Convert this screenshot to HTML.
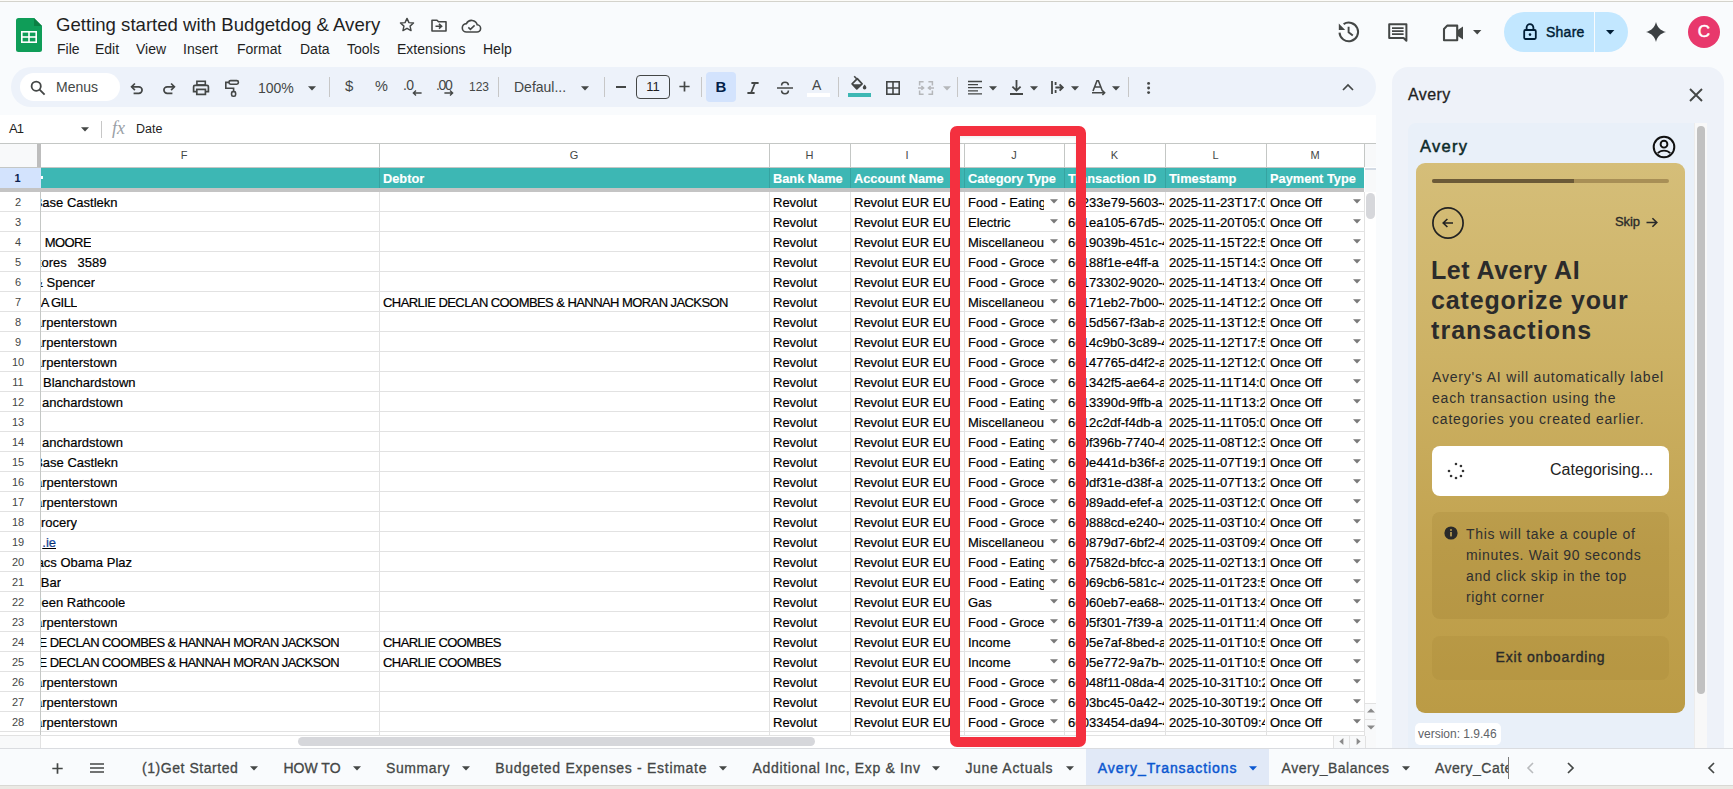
<!DOCTYPE html>
<html><head><meta charset="utf-8"><title>Sheets</title>
<style>
*{box-sizing:border-box;margin:0;padding:0}
html,body{width:1733px;height:789px;overflow:hidden;background:#f9fbfd;font-family:"Liberation Sans", sans-serif;color:#1f1f1f}
.abs{position:absolute}
.t{position:absolute;white-space:nowrap}
svg{position:absolute;overflow:visible}
.cell{position:absolute;overflow:hidden;white-space:pre;font-size:13px;line-height:20px;color:#000;padding-top:1px;-webkit-text-stroke:0.2px #000}
.cell .rt{top:1px}
.rt{position:absolute;right:0;top:0}
.hl{position:absolute;height:1px;background:#e2e2e2}
.vl{position:absolute;width:1px;background:#e2e2e2}
</style></head><body>

<div class="abs" style="left:0;top:0;width:1733px;height:1px;background:#fcfbf8"></div>
<div class="abs" style="left:0;top:1px;width:1733px;height:1px;background:#d4d3cc"></div>
<svg style="left:16px;top:18px" width="26" height="34" viewBox="0 0 26 34">
<path d="M2.5 0H18L26 8V31.5Q26 34 23.5 34H2.5Q0 34 0 31.5V2.5Q0 0 2.5 0Z" fill="#0f9d58"/>
<path d="M18 0L26 8H18Z" fill="#0b7f43"/>
<rect x="5" y="13" width="16" height="12" fill="#fff"/>
<rect x="6.6" y="14.6" width="5.6" height="3.6" fill="#0f9d58"/>
<rect x="13.8" y="14.6" width="5.6" height="3.6" fill="#0f9d58"/>
<rect x="6.6" y="19.8" width="5.6" height="3.6" fill="#0f9d58"/>
<rect x="13.8" y="19.8" width="5.6" height="3.6" fill="#0f9d58"/>
</svg>
<div class="t" style="left:56px;top:13px;font-size:18.6px;line-height:24px;color:#1f1f1f">Getting started with Budgetdog &amp; Avery</div>
<svg style="left:398px;top:16px" width="18" height="18" viewBox="0 0 24 24"><path d="M12 3.2l2.6 5.6 6.1.6-4.6 4.1 1.3 6-5.4-3.1-5.4 3.1 1.3-6-4.6-4.1 6.1-.6z" fill="none" stroke="#444746" stroke-width="1.9" stroke-linejoin="round"/></svg>
<svg style="left:431px;top:19px" width="16" height="13" viewBox="0 0 16 13"><path d="M1 1.2H6L7.5 2.7H15V12H1Z" fill="none" stroke="#444746" stroke-width="1.6" stroke-linejoin="round"/><path d="M4.5 7.2H10M8 4.8L10.6 7.2 8 9.6" fill="none" stroke="#444746" stroke-width="1.6"/></svg>
<svg style="left:462px;top:19px" width="19" height="14" viewBox="0 0 19 14"><path d="M4.6 13H14.8A3.6 3.6 0 0 0 15.2 5.8 5.8 5.8 0 0 0 4.4 4.6 4.2 4.2 0 0 0 4.6 13Z" fill="none" stroke="#444746" stroke-width="1.6"/><path d="M6.3 8.4L8.4 10.4 12.6 6.4" fill="none" stroke="#444746" stroke-width="1.5"/></svg>
<div class="t" style="left:57px;top:40px;font-size:14px;line-height:18px;color:#1f1f1f">File</div>
<div class="t" style="left:95px;top:40px;font-size:14px;line-height:18px;color:#1f1f1f">Edit</div>
<div class="t" style="left:136px;top:40px;font-size:14px;line-height:18px;color:#1f1f1f">View</div>
<div class="t" style="left:183px;top:40px;font-size:14px;line-height:18px;color:#1f1f1f">Insert</div>
<div class="t" style="left:237px;top:40px;font-size:14px;line-height:18px;color:#1f1f1f">Format</div>
<div class="t" style="left:300px;top:40px;font-size:14px;line-height:18px;color:#1f1f1f">Data</div>
<div class="t" style="left:347px;top:40px;font-size:14px;line-height:18px;color:#1f1f1f">Tools</div>
<div class="t" style="left:397px;top:40px;font-size:14px;line-height:18px;color:#1f1f1f">Extensions</div>
<div class="t" style="left:483px;top:40px;font-size:14px;line-height:18px;color:#1f1f1f">Help</div>
<svg style="left:1336px;top:20px" width="24" height="24" viewBox="0 0 24 24"><path d="M3.5 12.6A9.3 9.3 0 1 0 7.6 4.2" fill="none" stroke="#444746" stroke-width="2"/><path d="M2.8 3.6V10H9.2Z" fill="#444746"/><path d="M12.6 6.8V12.2L16.8 15.6" fill="none" stroke="#444746" stroke-width="1.9"/></svg>
<svg style="left:1387px;top:22px" width="22" height="22" viewBox="0 0 22 22"><path d="M2.2 2.2H19.4V18.8L16.6 16H2.2Z" fill="none" stroke="#444746" stroke-width="2" stroke-linejoin="round"/><path d="M5 6.2H16.6M5 9.2H16.6M5 12.2H16.6" stroke="#444746" stroke-width="1.7"/></svg>
<svg style="left:1442px;top:24px" width="23" height="18" viewBox="0 0 23 18"><path d="M5.2 1.6H15.2V16.2H2V5Z" fill="none" stroke="#444746" stroke-width="2.1" stroke-linejoin="round"/><path d="M15 6.6L21 2.6V15.4L15 11.4Z" fill="#444746"/></svg>
<svg style="left:1473px;top:30px" width="9" height="5" viewBox="0 0 9 5"><path d="M0 0H8.4L4.2 4.4Z" fill="#444746"/></svg>
<div class="abs" style="left:1504px;top:12px;width:124px;height:40px;border-radius:20px;background:#c2e7ff"></div>
<div class="abs" style="left:1594px;top:12px;width:1px;height:40px;background:#f9fbfd"></div>
<svg style="left:1523px;top:23px" width="14" height="17" viewBox="0 0 14 17"><rect x="1.2" y="7" width="11.6" height="9" rx="1.2" fill="none" stroke="#001d35" stroke-width="1.8"/><path d="M3.6 7V4.6A3.4 3.4 0 0 1 10.4 4.6V7" fill="none" stroke="#001d35" stroke-width="1.8"/><circle cx="7" cy="11.6" r="1.3" fill="#001d35"/></svg>
<div class="t" style="left:1546px;top:23px;font-size:14px;line-height:18px;color:#001d35;letter-spacing:0.25px;-webkit-text-stroke:0.4px #001d35">Share</div>
<svg style="left:1606px;top:30px" width="9" height="5" viewBox="0 0 9 5"><path d="M0 0H8.4L4.2 4.4Z" fill="#001d35"/></svg>
<svg style="left:1646px;top:22px" width="20" height="20" viewBox="0 0 20 20"><path d="M10 0C11.4 5.4 14.6 8.6 20 10C14.6 11.4 11.4 14.6 10 20C8.6 14.6 5.4 11.4 0 10C5.4 8.6 8.6 5.4 10 0Z" fill="#3c4043"/></svg>
<div class="abs" style="left:1688px;top:16px;width:32px;height:32px;border-radius:50%;background:#e8386c"></div>
<div class="t" style="left:1688px;top:22px;width:32px;text-align:center;font-size:17px;line-height:20px;color:#fff;-webkit-text-stroke:0.5px #fff">C</div>
<div class="abs" style="left:11px;top:67px;width:1365px;height:40px;border-radius:20px;background:#edf2fa"></div>
<div class="abs" style="left:20px;top:73px;width:100px;height:28px;border-radius:14px;background:#fff"></div>
<svg style="left:30px;top:80px" width="16" height="16" viewBox="0 0 16 16"><circle cx="6.2" cy="6.2" r="4.6" fill="none" stroke="#444746" stroke-width="1.8"/><path d="M9.6 9.6L14.6 14.6" stroke="#444746" stroke-width="1.9"/></svg>
<div class="t" style="left:56px;top:78px;font-size:14px;line-height:18px;color:#444746">Menus</div>
<svg style="left:130px;top:81px" width="14" height="14" viewBox="0 0 14 14"><path d="M1.8 5.8H8.8A3.3 3.3 0 0 1 8.8 12.4H3.6" fill="none" stroke="#444746" stroke-width="1.7"/><path d="M4.9 2.5L1.6 5.8 4.9 9.1" fill="none" stroke="#444746" stroke-width="1.7"/></svg>
<svg style="left:162px;top:81px" width="14" height="14" viewBox="0 0 14 14"><path d="M12.2 5.8H5.2A3.3 3.3 0 0 0 5.2 12.4H10.4" fill="none" stroke="#444746" stroke-width="1.7"/><path d="M9.1 2.5L12.4 5.8 9.1 9.1" fill="none" stroke="#444746" stroke-width="1.7"/></svg>
<svg style="left:192px;top:80px" width="18" height="16" viewBox="0 0 18 16"><rect x="4.9" y="1.3" width="8.4" height="3.6" fill="none" stroke="#444746" stroke-width="1.6"/><path d="M4.4 11.6H1.6V6.8Q1.6 5.4 3 5.4H15Q16.4 5.4 16.4 6.8V11.6H13.6" fill="none" stroke="#444746" stroke-width="1.7"/><rect x="4.8" y="9.4" width="8.6" height="5" fill="none" stroke="#444746" stroke-width="1.7"/></svg>
<svg style="left:224px;top:79px" width="16" height="18" viewBox="0 0 16 18"><rect x="5" y="1.6" width="9.4" height="3.6" rx="1.6" fill="none" stroke="#444746" stroke-width="1.6"/><path d="M5 3.4H1.8V9.2H9.6V12.6" fill="none" stroke="#444746" stroke-width="1.6"/><rect x="7.6" y="12.6" width="4" height="4.6" rx="1.5" fill="none" stroke="#444746" stroke-width="1.6"/></svg>
<div class="t" style="left:258px;top:79px;font-size:14px;line-height:18px;color:#444746">100%</div>
<svg style="left:308px;top:86px" width="8" height="5" viewBox="0 0 8 4.4"><path d="M0 0H8L4 4.2Z" fill="#444746"/></svg>
<div class="abs" style="left:329px;top:77px;width:1px;height:20px;background:#c7c7c7"></div>
<div class="abs" style="left:498px;top:77px;width:1px;height:20px;background:#c7c7c7"></div>
<div class="abs" style="left:604px;top:77px;width:1px;height:20px;background:#c7c7c7"></div>
<div class="abs" style="left:701px;top:77px;width:1px;height:20px;background:#c7c7c7"></div>
<div class="abs" style="left:838px;top:77px;width:1px;height:20px;background:#c7c7c7"></div>
<div class="abs" style="left:957px;top:77px;width:1px;height:20px;background:#c7c7c7"></div>
<div class="abs" style="left:1128px;top:77px;width:1px;height:20px;background:#c7c7c7"></div>
<div class="t" style="left:345px;top:77px;font-size:15px;line-height:18px;color:#444746">$</div>
<div class="t" style="left:375px;top:77px;font-size:14.5px;line-height:18px;color:#444746">%</div>
<div class="t" style="left:403px;top:77px;font-size:14px;line-height:16px;color:#444746;letter-spacing:-0.6px">.0</div>
<svg style="left:412px;top:90px" width="10" height="6" viewBox="0 0 10 6"><path d="M9.6 3H1.6M4 0.6L1.4 3 4 5.4" fill="none" stroke="#444746" stroke-width="1.4"/></svg>
<div class="t" style="left:436px;top:77px;font-size:14px;line-height:16px;color:#444746;letter-spacing:-1.4px">.00</div>
<svg style="left:444px;top:90px" width="10" height="6" viewBox="0 0 10 6"><path d="M0.4 3H8.4M6 0.6L8.6 3 6 5.4" fill="none" stroke="#444746" stroke-width="1.4"/></svg>
<div class="t" style="left:469px;top:79px;font-size:12px;line-height:16px;color:#444746">123</div>
<div class="t" style="left:514px;top:78px;font-size:14px;line-height:18px;color:#444746">Defaul...</div>
<svg style="left:581px;top:86px" width="8" height="5" viewBox="0 0 8 4.4"><path d="M0 0H8L4 4.2Z" fill="#444746"/></svg>
<div class="abs" style="left:616px;top:86px;width:10px;height:1.6px;background:#444746"></div>
<div class="abs" style="left:636px;top:75px;width:34px;height:24px;border:1px solid #444746;border-radius:4px"></div>
<div class="t" style="left:636px;top:79px;width:34px;text-align:center;font-size:13px;line-height:16px;color:#1f1f1f">11</div>
<svg style="left:679px;top:81px" width="11" height="11" viewBox="0 0 11 11"><path d="M5.5 0.4V10.6M0.4 5.5H10.6" stroke="#444746" stroke-width="1.7"/></svg>
<div class="abs" style="left:706px;top:72px;width:30px;height:30px;border-radius:4px;background:#d3e3fd"></div>
<div class="t" style="left:706px;top:78px;width:30px;text-align:center;font-size:15px;line-height:18px;font-weight:bold;color:#041e49">B</div>
<svg style="left:747px;top:82px" width="12" height="12" viewBox="0 0 12 12"><path d="M4.4 1H11.6M0.4 11H7.6M8 1L4 11" fill="none" stroke="#444746" stroke-width="1.8"/></svg>
<svg style="left:777px;top:81px" width="16" height="14" viewBox="0 0 16 14"><path d="M0 7H16" stroke="#444746" stroke-width="1.5"/><path d="M4.6 4.6Q4.6 1.2 8 1.2T11.4 4.2M4.6 9.6Q4.6 12.8 8 12.8T11.4 9.6" fill="none" stroke="#444746" stroke-width="1.6"/></svg>
<div class="t" style="left:812px;top:77px;font-size:14px;line-height:16px;color:#444746">A</div>
<div class="abs" style="left:807px;top:93px;width:23px;height:4px;background:#ffffff"></div>
<svg style="left:851px;top:76px" width="16" height="14" viewBox="0 0 16 14"><path d="M3.2 0.3L6.6 3.7" stroke="#444746" stroke-width="1.6"/><path d="M1.1 7.9L6.3 2.7 11.1 7.9 5.8 12.9Z" fill="none" stroke="#444746" stroke-width="1.7" stroke-linejoin="round"/><path d="M1.1 8.2H11.1L5.8 12.9Z" fill="#444746"/><path d="M13.6 8.6Q15.4 10.6 15.4 11.7A1.8 1.8 0 0 1 11.8 11.7Q11.8 10.6 13.6 8.6Z" fill="#444746"/></svg>
<div class="abs" style="left:848px;top:93px;width:23px;height:4px;background:#3db7b4"></div>
<svg style="left:886px;top:81px" width="14" height="14" viewBox="0 0 14 14"><rect x="0.8" y="0.8" width="12.4" height="12.4" fill="none" stroke="#444746" stroke-width="1.6"/><path d="M7 1V13M1 7H13" stroke="#444746" stroke-width="1.6"/></svg>
<svg style="left:918px;top:81px" width="16" height="14" viewBox="0 0 16 14"><path d="M5.6 0.8H1.6V4.4M1.6 9.6V13.2H5.6M10.4 0.8H14.4V4.4M14.4 9.6V13.2H10.4" fill="none" stroke="#b5b7ba" stroke-width="1.5"/><path d="M0 6.9H5M3.4 5L5.6 6.9 3.4 8.8M16 6.9H11M12.6 5L10.4 6.9 12.6 8.8" fill="none" stroke="#b5b7ba" stroke-width="1.5"/></svg>
<svg style="left:943px;top:86px" width="8" height="5" viewBox="0 0 8 4.4"><path d="M0 0H8L4 4.2Z" fill="#b5b7ba"/></svg>
<svg style="left:968px;top:80px" width="14" height="15" viewBox="0 0 14 15"><path d="M0 1.5H14M0 4.6H10M0 7.7H14M0 10.8H10M0 13.9H14" stroke="#444746" stroke-width="1.3"/></svg>
<svg style="left:989px;top:86px" width="8" height="5" viewBox="0 0 8 4.4"><path d="M0 0H8L4 4.2Z" fill="#444746"/></svg>
<svg style="left:1010px;top:80px" width="13" height="15" viewBox="0 0 13 15"><path d="M6.5 0V10.4M2.4 6.6L6.5 10.6 10.6 6.6M0 14H13" fill="none" stroke="#444746" stroke-width="1.8"/></svg>
<svg style="left:1030px;top:86px" width="8" height="5" viewBox="0 0 8 4.4"><path d="M0 0H8L4 4.2Z" fill="#444746"/></svg>
<svg style="left:1051px;top:81px" width="13" height="13" viewBox="0 0 13 13"><path d="M1 0V13M4.4 6.5H11.6M8.6 3.4L11.8 6.5 8.6 9.6M4.6 1V4M4.6 9V12" fill="none" stroke="#444746" stroke-width="1.8"/></svg>
<svg style="left:1071px;top:86px" width="8" height="5" viewBox="0 0 8 4.4"><path d="M0 0H8L4 4.2Z" fill="#444746"/></svg>
<svg style="left:1092px;top:80px" width="14" height="15" viewBox="0 0 14 15"><path d="M1 11L5 0.8H6.4L10.4 11M2.6 7H8.8" fill="none" stroke="#444746" stroke-width="1.6"/><path d="M0 12.8H12M10.4 10.6L12.6 12.8 10.4 15" fill="none" stroke="#444746" stroke-width="1.6"/></svg>
<svg style="left:1112px;top:86px" width="8" height="5" viewBox="0 0 8 4.4"><path d="M0 0H8L4 4.2Z" fill="#444746"/></svg>
<svg style="left:1146px;top:81px" width="5" height="14" viewBox="0 0 5 14"><circle cx="2.6" cy="2.4" r="1.45" fill="#444746"/><circle cx="2.6" cy="7" r="1.45" fill="#444746"/><circle cx="2.6" cy="11.6" r="1.45" fill="#444746"/></svg>
<svg style="left:1342px;top:83px" width="12" height="8" viewBox="0 0 12 8"><path d="M1 7L6 2 11 7" fill="none" stroke="#444746" stroke-width="1.7"/></svg>
<div class="abs" style="left:0;top:115px;width:1376px;height:633px;background:#fff"></div>
<div class="t" style="left:9px;top:121px;font-size:13px;line-height:16px;color:#1f1f1f;letter-spacing:-0.8px">A1</div>
<svg style="left:81px;top:127px" width="8" height="5" viewBox="0 0 8 4.4"><path d="M0 0H8L4 4.2Z" fill="#444746"/></svg>
<div class="abs" style="left:101px;top:121px;width:1px;height:17px;background:#c7c7c7"></div>
<div class="t" style="left:112px;top:119px;font-family:'Liberation Serif',serif;font-style:italic;font-size:18px;line-height:18px;color:#9aa0a6;letter-spacing:0px">fx</div>
<div class="t" style="left:136px;top:121px;font-size:12.5px;line-height:16px;color:#1f1f1f">Date</div>
<div class="abs" style="left:0;top:143px;width:1376px;height:1px;background:#c4c7c5"></div>
<div class="abs" style="left:0;top:144px;width:37px;height:23px;background:#f8f9fa"></div>
<div class="t" style="left:164px;top:147px;width:40px;text-align:center;font-size:11px;line-height:16px;color:#444746">F</div>
<div class="abs" style="left:379px;top:144px;width:1px;height:23px;background:#c4c7c5"></div>
<div class="t" style="left:554.0px;top:147px;width:40px;text-align:center;font-size:11px;line-height:16px;color:#444746">G</div>
<div class="abs" style="left:769px;top:144px;width:1px;height:23px;background:#c4c7c5"></div>
<div class="t" style="left:789.5px;top:147px;width:40px;text-align:center;font-size:11px;line-height:16px;color:#444746">H</div>
<div class="abs" style="left:850px;top:144px;width:1px;height:23px;background:#c4c7c5"></div>
<div class="t" style="left:887.0px;top:147px;width:40px;text-align:center;font-size:11px;line-height:16px;color:#444746">I</div>
<div class="abs" style="left:964px;top:144px;width:1px;height:23px;background:#c4c7c5"></div>
<div class="t" style="left:994.0px;top:147px;width:40px;text-align:center;font-size:11px;line-height:16px;color:#444746">J</div>
<div class="abs" style="left:1064px;top:144px;width:1px;height:23px;background:#c4c7c5"></div>
<div class="t" style="left:1094.5px;top:147px;width:40px;text-align:center;font-size:11px;line-height:16px;color:#444746">K</div>
<div class="abs" style="left:1165px;top:144px;width:1px;height:23px;background:#c4c7c5"></div>
<div class="t" style="left:1195.5px;top:147px;width:40px;text-align:center;font-size:11px;line-height:16px;color:#444746">L</div>
<div class="abs" style="left:1266px;top:144px;width:1px;height:23px;background:#c4c7c5"></div>
<div class="t" style="left:1295.0px;top:147px;width:40px;text-align:center;font-size:11px;line-height:16px;color:#444746">M</div>
<div class="abs" style="left:1364px;top:144px;width:1px;height:23px;background:#c4c7c5"></div>
<div class="abs" style="left:0;top:167px;width:1364px;height:1px;background:#c4c7c5"></div>
<div class="abs" style="left:1365px;top:144px;width:11px;height:23px;background:#f8f9fa"></div>
<div class="abs" style="left:37px;top:144px;width:4px;height:23px;background:#bdbdbd"></div>
<div class="abs" style="left:0;top:168px;width:41px;height:20px;background:#d3e3fd"></div>
<div class="t" style="left:0;top:170px;width:35px;text-align:center;font-size:11px;line-height:16px;font-weight:bold;color:#0b1f4d">1</div>
<div class="abs" style="left:41px;top:168px;width:1323px;height:20px;background:#3db7b4"></div>
<div class="abs" style="left:379px;top:168px;width:1px;height:20px;background:#36a3a1"></div>
<div class="abs" style="left:769px;top:168px;width:1px;height:20px;background:#36a3a1"></div>
<div class="abs" style="left:850px;top:168px;width:1px;height:20px;background:#36a3a1"></div>
<div class="abs" style="left:964px;top:168px;width:1px;height:20px;background:#36a3a1"></div>
<div class="abs" style="left:1064px;top:168px;width:1px;height:20px;background:#36a3a1"></div>
<div class="abs" style="left:1165px;top:168px;width:1px;height:20px;background:#36a3a1"></div>
<div class="abs" style="left:1266px;top:168px;width:1px;height:20px;background:#36a3a1"></div>
<div class="cell" style="left:380px;top:168px;width:389px;height:20px;line-height:20px;font-size:12.8px;font-weight:bold;color:#fff;padding-left:3px;padding-top:1px;-webkit-text-stroke:0.15px #fff">Debtor</div>
<div class="cell" style="left:770px;top:168px;width:80px;height:20px;line-height:20px;font-size:12.8px;font-weight:bold;color:#fff;padding-left:3px;padding-top:1px;-webkit-text-stroke:0.15px #fff">Bank Name</div>
<div class="cell" style="left:851px;top:168px;width:113px;height:20px;line-height:20px;font-size:12.8px;font-weight:bold;color:#fff;padding-left:3px;padding-top:1px;-webkit-text-stroke:0.15px #fff">Account Name</div>
<div class="cell" style="left:965px;top:168px;width:99px;height:20px;line-height:20px;font-size:12.8px;font-weight:bold;color:#fff;padding-left:3px;padding-top:1px;-webkit-text-stroke:0.15px #fff">Category Type</div>
<div class="cell" style="left:1065px;top:168px;width:100px;height:20px;line-height:20px;font-size:12.8px;font-weight:bold;color:#fff;padding-left:3px;padding-top:1px;-webkit-text-stroke:0.15px #fff">Transaction ID</div>
<div class="cell" style="left:1166px;top:168px;width:100px;height:20px;line-height:20px;font-size:12.8px;font-weight:bold;color:#fff;padding-left:3px;padding-top:1px;-webkit-text-stroke:0.15px #fff">Timestamp</div>
<div class="cell" style="left:1267px;top:168px;width:97px;height:20px;line-height:20px;font-size:12.8px;font-weight:bold;color:#fff;padding-left:3px;padding-top:1px;-webkit-text-stroke:0.15px #fff">Payment Type</div>
<div class="abs" style="left:41px;top:176px;width:2px;height:3px;background:#fff"></div>
<div class="abs" style="left:1365px;top:168px;width:11px;height:2px;background:#d3dbe5"></div>
<div class="abs" style="left:1365px;top:170px;width:11px;height:22px;background:#f8f9fa"></div>
<div class="abs" style="left:0;top:188px;width:1364px;height:4px;background:#c4c4c4"></div>
<div class="t" style="left:0;top:194px;width:36px;text-align:center;font-size:11px;line-height:16px;color:#444746">2</div>
<div class="cell" style="left:41px;top:192px;width:76.5px;height:19px"><span class="rt" style="">Base Castlekn</span></div>
<div class="cell" style="left:773px;top:192px;width:76px;height:19px">Revolut</div>
<div class="cell" style="left:854px;top:192px;width:109px;height:19px">Revolut EUR EUR</div>
<div class="cell" style="left:968px;top:192px;width:76px;height:19px">Food - Eating</div>
<svg style="left:1050px;top:199px" width="8" height="5" viewBox="0 0 8 4.4"><path d="M0 0H8L4 4.2Z" fill="#7a7a7a"/></svg>
<div class="cell" style="left:1068px;top:192px;width:96px;height:19px">6c233e79-5603-4</div>
<div class="cell" style="left:1169px;top:192px;width:96px;height:19px">2025-11-23T17:05</div>
<div class="cell" style="left:1270px;top:192px;width:80px;height:19px">Once Off</div>
<svg style="left:1353px;top:199px" width="8" height="5" viewBox="0 0 8 4.4"><path d="M0 0H8L4 4.2Z" fill="#7a7a7a"/></svg>
<div class="hl" style="left:0;top:211px;width:1364px"></div>
<div class="t" style="left:0;top:214px;width:36px;text-align:center;font-size:11px;line-height:16px;color:#444746">3</div>
<div class="cell" style="left:773px;top:212px;width:76px;height:19px">Revolut</div>
<div class="cell" style="left:854px;top:212px;width:109px;height:19px">Revolut EUR EUR</div>
<div class="cell" style="left:968px;top:212px;width:76px;height:19px">Electric</div>
<svg style="left:1050px;top:219px" width="8" height="5" viewBox="0 0 8 4.4"><path d="M0 0H8L4 4.2Z" fill="#7a7a7a"/></svg>
<div class="cell" style="left:1068px;top:212px;width:96px;height:19px">6c1ea105-67d5-4</div>
<div class="cell" style="left:1169px;top:212px;width:96px;height:19px">2025-11-20T05:04</div>
<div class="cell" style="left:1270px;top:212px;width:80px;height:19px">Once Off</div>
<svg style="left:1353px;top:219px" width="8" height="5" viewBox="0 0 8 4.4"><path d="M0 0H8L4 4.2Z" fill="#7a7a7a"/></svg>
<div class="hl" style="left:0;top:231px;width:1364px"></div>
<div class="t" style="left:0;top:234px;width:36px;text-align:center;font-size:11px;line-height:16px;color:#444746">4</div>
<div class="cell" style="left:41px;top:232px;width:50px;height:19px"><span class="rt" style="letter-spacing:-0.57px">MOORE</span></div>
<div class="cell" style="left:773px;top:232px;width:76px;height:19px">Revolut</div>
<div class="cell" style="left:854px;top:232px;width:109px;height:19px">Revolut EUR EUR</div>
<div class="cell" style="left:968px;top:232px;width:76px;height:19px">Miscellaneous</div>
<svg style="left:1050px;top:239px" width="8" height="5" viewBox="0 0 8 4.4"><path d="M0 0H8L4 4.2Z" fill="#7a7a7a"/></svg>
<div class="cell" style="left:1068px;top:232px;width:96px;height:19px">6c19039b-451c-4</div>
<div class="cell" style="left:1169px;top:232px;width:96px;height:19px">2025-11-15T22:51</div>
<div class="cell" style="left:1270px;top:232px;width:80px;height:19px">Once Off</div>
<svg style="left:1353px;top:239px" width="8" height="5" viewBox="0 0 8 4.4"><path d="M0 0H8L4 4.2Z" fill="#7a7a7a"/></svg>
<div class="hl" style="left:0;top:251px;width:1364px"></div>
<div class="t" style="left:0;top:254px;width:36px;text-align:center;font-size:11px;line-height:16px;color:#444746">5</div>
<div class="cell" style="left:41px;top:252px;width:65.5px;height:19px"><span class="rt" style="">Stores   3589</span></div>
<div class="cell" style="left:773px;top:252px;width:76px;height:19px">Revolut</div>
<div class="cell" style="left:854px;top:252px;width:109px;height:19px">Revolut EUR EUR</div>
<div class="cell" style="left:968px;top:252px;width:76px;height:19px">Food - Groceries</div>
<svg style="left:1050px;top:259px" width="8" height="5" viewBox="0 0 8 4.4"><path d="M0 0H8L4 4.2Z" fill="#7a7a7a"/></svg>
<div class="cell" style="left:1068px;top:252px;width:96px;height:19px">6c188f1e-e4ff-a</div>
<div class="cell" style="left:1169px;top:252px;width:96px;height:19px">2025-11-15T14:33</div>
<div class="cell" style="left:1270px;top:252px;width:80px;height:19px">Once Off</div>
<svg style="left:1353px;top:259px" width="8" height="5" viewBox="0 0 8 4.4"><path d="M0 0H8L4 4.2Z" fill="#7a7a7a"/></svg>
<div class="hl" style="left:0;top:271px;width:1364px"></div>
<div class="t" style="left:0;top:274px;width:36px;text-align:center;font-size:11px;line-height:16px;color:#444746">6</div>
<div class="cell" style="left:41px;top:272px;width:54px;height:19px"><span class="rt" style="">&amp; Spencer</span></div>
<div class="cell" style="left:773px;top:272px;width:76px;height:19px">Revolut</div>
<div class="cell" style="left:854px;top:272px;width:109px;height:19px">Revolut EUR EUR</div>
<div class="cell" style="left:968px;top:272px;width:76px;height:19px">Food - Groceries</div>
<svg style="left:1050px;top:279px" width="8" height="5" viewBox="0 0 8 4.4"><path d="M0 0H8L4 4.2Z" fill="#7a7a7a"/></svg>
<div class="cell" style="left:1068px;top:272px;width:96px;height:19px">6c173302-9020-4</div>
<div class="cell" style="left:1169px;top:272px;width:96px;height:19px">2025-11-14T13:42</div>
<div class="cell" style="left:1270px;top:272px;width:80px;height:19px">Once Off</div>
<svg style="left:1353px;top:279px" width="8" height="5" viewBox="0 0 8 4.4"><path d="M0 0H8L4 4.2Z" fill="#7a7a7a"/></svg>
<div class="hl" style="left:0;top:291px;width:1364px"></div>
<div class="t" style="left:0;top:294px;width:36px;text-align:center;font-size:11px;line-height:16px;color:#444746">7</div>
<div class="cell" style="left:41px;top:292px;width:36px;height:19px"><span class="rt" style="letter-spacing:-0.57px">A GILL</span></div>
<div class="cell" style="left:383px;top:292px;width:380px;height:19px;letter-spacing:-0.57px">CHARLIE DECLAN COOMBES &amp; HANNAH MORAN JACKSON</div>
<div class="cell" style="left:773px;top:292px;width:76px;height:19px">Revolut</div>
<div class="cell" style="left:854px;top:292px;width:109px;height:19px">Revolut EUR EUR</div>
<div class="cell" style="left:968px;top:292px;width:76px;height:19px">Miscellaneous</div>
<svg style="left:1050px;top:299px" width="8" height="5" viewBox="0 0 8 4.4"><path d="M0 0H8L4 4.2Z" fill="#7a7a7a"/></svg>
<div class="cell" style="left:1068px;top:292px;width:96px;height:19px">6c171eb2-7b00-4</div>
<div class="cell" style="left:1169px;top:292px;width:96px;height:19px">2025-11-14T12:21</div>
<div class="cell" style="left:1270px;top:292px;width:80px;height:19px">Once Off</div>
<svg style="left:1353px;top:299px" width="8" height="5" viewBox="0 0 8 4.4"><path d="M0 0H8L4 4.2Z" fill="#7a7a7a"/></svg>
<div class="hl" style="left:0;top:311px;width:1364px"></div>
<div class="t" style="left:0;top:314px;width:36px;text-align:center;font-size:11px;line-height:16px;color:#444746">8</div>
<div class="cell" style="left:41px;top:312px;width:76px;height:19px"><span class="rt" style="">Carpenterstown</span></div>
<div class="cell" style="left:773px;top:312px;width:76px;height:19px">Revolut</div>
<div class="cell" style="left:854px;top:312px;width:109px;height:19px">Revolut EUR EUR</div>
<div class="cell" style="left:968px;top:312px;width:76px;height:19px">Food - Groceries</div>
<svg style="left:1050px;top:319px" width="8" height="5" viewBox="0 0 8 4.4"><path d="M0 0H8L4 4.2Z" fill="#7a7a7a"/></svg>
<div class="cell" style="left:1068px;top:312px;width:96px;height:19px">6c15d567-f3ab-a</div>
<div class="cell" style="left:1169px;top:312px;width:96px;height:19px">2025-11-13T12:53</div>
<div class="cell" style="left:1270px;top:312px;width:80px;height:19px">Once Off</div>
<svg style="left:1353px;top:319px" width="8" height="5" viewBox="0 0 8 4.4"><path d="M0 0H8L4 4.2Z" fill="#7a7a7a"/></svg>
<div class="hl" style="left:0;top:331px;width:1364px"></div>
<div class="t" style="left:0;top:334px;width:36px;text-align:center;font-size:11px;line-height:16px;color:#444746">9</div>
<div class="cell" style="left:41px;top:332px;width:76px;height:19px"><span class="rt" style="">Carpenterstown</span></div>
<div class="cell" style="left:773px;top:332px;width:76px;height:19px">Revolut</div>
<div class="cell" style="left:854px;top:332px;width:109px;height:19px">Revolut EUR EUR</div>
<div class="cell" style="left:968px;top:332px;width:76px;height:19px">Food - Groceries</div>
<svg style="left:1050px;top:339px" width="8" height="5" viewBox="0 0 8 4.4"><path d="M0 0H8L4 4.2Z" fill="#7a7a7a"/></svg>
<div class="cell" style="left:1068px;top:332px;width:96px;height:19px">6c14c9b0-3c89-4</div>
<div class="cell" style="left:1169px;top:332px;width:96px;height:19px">2025-11-12T17:55</div>
<div class="cell" style="left:1270px;top:332px;width:80px;height:19px">Once Off</div>
<svg style="left:1353px;top:339px" width="8" height="5" viewBox="0 0 8 4.4"><path d="M0 0H8L4 4.2Z" fill="#7a7a7a"/></svg>
<div class="hl" style="left:0;top:351px;width:1364px"></div>
<div class="t" style="left:0;top:354px;width:36px;text-align:center;font-size:11px;line-height:16px;color:#444746">10</div>
<div class="cell" style="left:41px;top:352px;width:76px;height:19px"><span class="rt" style="">Carpenterstown</span></div>
<div class="cell" style="left:773px;top:352px;width:76px;height:19px">Revolut</div>
<div class="cell" style="left:854px;top:352px;width:109px;height:19px">Revolut EUR EUR</div>
<div class="cell" style="left:968px;top:352px;width:76px;height:19px">Food - Groceries</div>
<svg style="left:1050px;top:359px" width="8" height="5" viewBox="0 0 8 4.4"><path d="M0 0H8L4 4.2Z" fill="#7a7a7a"/></svg>
<div class="cell" style="left:1068px;top:352px;width:96px;height:19px">6c147765-d4f2-a</div>
<div class="cell" style="left:1169px;top:352px;width:96px;height:19px">2025-11-12T12:02</div>
<div class="cell" style="left:1270px;top:352px;width:80px;height:19px">Once Off</div>
<svg style="left:1353px;top:359px" width="8" height="5" viewBox="0 0 8 4.4"><path d="M0 0H8L4 4.2Z" fill="#7a7a7a"/></svg>
<div class="hl" style="left:0;top:371px;width:1364px"></div>
<div class="t" style="left:0;top:374px;width:36px;text-align:center;font-size:11px;line-height:16px;color:#444746">11</div>
<div class="cell" style="left:41px;top:372px;width:94.5px;height:19px"><span class="rt" style="">Blanchardstown</span></div>
<div class="cell" style="left:773px;top:372px;width:76px;height:19px">Revolut</div>
<div class="cell" style="left:854px;top:372px;width:109px;height:19px">Revolut EUR EUR</div>
<div class="cell" style="left:968px;top:372px;width:76px;height:19px">Food - Groceries</div>
<svg style="left:1050px;top:379px" width="8" height="5" viewBox="0 0 8 4.4"><path d="M0 0H8L4 4.2Z" fill="#7a7a7a"/></svg>
<div class="cell" style="left:1068px;top:372px;width:96px;height:19px">6c1342f5-ae64-a</div>
<div class="cell" style="left:1169px;top:372px;width:96px;height:19px">2025-11-11T14:09</div>
<div class="cell" style="left:1270px;top:372px;width:80px;height:19px">Once Off</div>
<svg style="left:1353px;top:379px" width="8" height="5" viewBox="0 0 8 4.4"><path d="M0 0H8L4 4.2Z" fill="#7a7a7a"/></svg>
<div class="hl" style="left:0;top:391px;width:1364px"></div>
<div class="t" style="left:0;top:394px;width:36px;text-align:center;font-size:11px;line-height:16px;color:#444746">12</div>
<div class="cell" style="left:41px;top:392px;width:82px;height:19px"><span class="rt" style="">anchardstown</span></div>
<div class="cell" style="left:773px;top:392px;width:76px;height:19px">Revolut</div>
<div class="cell" style="left:854px;top:392px;width:109px;height:19px">Revolut EUR EUR</div>
<div class="cell" style="left:968px;top:392px;width:76px;height:19px">Food - Eating</div>
<svg style="left:1050px;top:399px" width="8" height="5" viewBox="0 0 8 4.4"><path d="M0 0H8L4 4.2Z" fill="#7a7a7a"/></svg>
<div class="cell" style="left:1068px;top:392px;width:96px;height:19px">6c13390d-9ffb-a</div>
<div class="cell" style="left:1169px;top:392px;width:96px;height:19px">2025-11-11T13:22</div>
<div class="cell" style="left:1270px;top:392px;width:80px;height:19px">Once Off</div>
<svg style="left:1353px;top:399px" width="8" height="5" viewBox="0 0 8 4.4"><path d="M0 0H8L4 4.2Z" fill="#7a7a7a"/></svg>
<div class="hl" style="left:0;top:411px;width:1364px"></div>
<div class="t" style="left:0;top:414px;width:36px;text-align:center;font-size:11px;line-height:16px;color:#444746">13</div>
<div class="cell" style="left:773px;top:412px;width:76px;height:19px">Revolut</div>
<div class="cell" style="left:854px;top:412px;width:109px;height:19px">Revolut EUR EUR</div>
<div class="cell" style="left:968px;top:412px;width:76px;height:19px">Miscellaneous</div>
<svg style="left:1050px;top:419px" width="8" height="5" viewBox="0 0 8 4.4"><path d="M0 0H8L4 4.2Z" fill="#7a7a7a"/></svg>
<div class="cell" style="left:1068px;top:412px;width:96px;height:19px">6c12c2df-f4db-a</div>
<div class="cell" style="left:1169px;top:412px;width:96px;height:19px">2025-11-11T05:04</div>
<div class="cell" style="left:1270px;top:412px;width:80px;height:19px">Once Off</div>
<svg style="left:1353px;top:419px" width="8" height="5" viewBox="0 0 8 4.4"><path d="M0 0H8L4 4.2Z" fill="#7a7a7a"/></svg>
<div class="hl" style="left:0;top:431px;width:1364px"></div>
<div class="t" style="left:0;top:434px;width:36px;text-align:center;font-size:11px;line-height:16px;color:#444746">14</div>
<div class="cell" style="left:41px;top:432px;width:82px;height:19px"><span class="rt" style="">anchardstown</span></div>
<div class="cell" style="left:773px;top:432px;width:76px;height:19px">Revolut</div>
<div class="cell" style="left:854px;top:432px;width:109px;height:19px">Revolut EUR EUR</div>
<div class="cell" style="left:968px;top:432px;width:76px;height:19px">Food - Eating</div>
<svg style="left:1050px;top:439px" width="8" height="5" viewBox="0 0 8 4.4"><path d="M0 0H8L4 4.2Z" fill="#7a7a7a"/></svg>
<div class="cell" style="left:1068px;top:432px;width:96px;height:19px">6c0f396b-7740-4</div>
<div class="cell" style="left:1169px;top:432px;width:96px;height:19px">2025-11-08T12:31</div>
<div class="cell" style="left:1270px;top:432px;width:80px;height:19px">Once Off</div>
<svg style="left:1353px;top:439px" width="8" height="5" viewBox="0 0 8 4.4"><path d="M0 0H8L4 4.2Z" fill="#7a7a7a"/></svg>
<div class="hl" style="left:0;top:451px;width:1364px"></div>
<div class="t" style="left:0;top:454px;width:36px;text-align:center;font-size:11px;line-height:16px;color:#444746">15</div>
<div class="cell" style="left:41px;top:452px;width:77px;height:19px"><span class="rt" style="">Base Castlekn</span></div>
<div class="cell" style="left:773px;top:452px;width:76px;height:19px">Revolut</div>
<div class="cell" style="left:854px;top:452px;width:109px;height:19px">Revolut EUR EUR</div>
<div class="cell" style="left:968px;top:452px;width:76px;height:19px">Food - Eating</div>
<svg style="left:1050px;top:459px" width="8" height="5" viewBox="0 0 8 4.4"><path d="M0 0H8L4 4.2Z" fill="#7a7a7a"/></svg>
<div class="cell" style="left:1068px;top:452px;width:96px;height:19px">6c0e441d-b36f-a</div>
<div class="cell" style="left:1169px;top:452px;width:96px;height:19px">2025-11-07T19:11</div>
<div class="cell" style="left:1270px;top:452px;width:80px;height:19px">Once Off</div>
<svg style="left:1353px;top:459px" width="8" height="5" viewBox="0 0 8 4.4"><path d="M0 0H8L4 4.2Z" fill="#7a7a7a"/></svg>
<div class="hl" style="left:0;top:471px;width:1364px"></div>
<div class="t" style="left:0;top:474px;width:36px;text-align:center;font-size:11px;line-height:16px;color:#444746">16</div>
<div class="cell" style="left:41px;top:472px;width:76.4px;height:19px"><span class="rt" style="">Carpenterstown</span></div>
<div class="cell" style="left:773px;top:472px;width:76px;height:19px">Revolut</div>
<div class="cell" style="left:854px;top:472px;width:109px;height:19px">Revolut EUR EUR</div>
<div class="cell" style="left:968px;top:472px;width:76px;height:19px">Food - Groceries</div>
<svg style="left:1050px;top:479px" width="8" height="5" viewBox="0 0 8 4.4"><path d="M0 0H8L4 4.2Z" fill="#7a7a7a"/></svg>
<div class="cell" style="left:1068px;top:472px;width:96px;height:19px">6c0df31e-d38f-a</div>
<div class="cell" style="left:1169px;top:472px;width:96px;height:19px">2025-11-07T13:24</div>
<div class="cell" style="left:1270px;top:472px;width:80px;height:19px">Once Off</div>
<svg style="left:1353px;top:479px" width="8" height="5" viewBox="0 0 8 4.4"><path d="M0 0H8L4 4.2Z" fill="#7a7a7a"/></svg>
<div class="hl" style="left:0;top:491px;width:1364px"></div>
<div class="t" style="left:0;top:494px;width:36px;text-align:center;font-size:11px;line-height:16px;color:#444746">17</div>
<div class="cell" style="left:41px;top:492px;width:76.4px;height:19px"><span class="rt" style="">Carpenterstown</span></div>
<div class="cell" style="left:773px;top:492px;width:76px;height:19px">Revolut</div>
<div class="cell" style="left:854px;top:492px;width:109px;height:19px">Revolut EUR EUR</div>
<div class="cell" style="left:968px;top:492px;width:76px;height:19px">Food - Groceries</div>
<svg style="left:1050px;top:499px" width="8" height="5" viewBox="0 0 8 4.4"><path d="M0 0H8L4 4.2Z" fill="#7a7a7a"/></svg>
<div class="cell" style="left:1068px;top:492px;width:96px;height:19px">6c089add-efef-a</div>
<div class="cell" style="left:1169px;top:492px;width:96px;height:19px">2025-11-03T12:04</div>
<div class="cell" style="left:1270px;top:492px;width:80px;height:19px">Once Off</div>
<svg style="left:1353px;top:499px" width="8" height="5" viewBox="0 0 8 4.4"><path d="M0 0H8L4 4.2Z" fill="#7a7a7a"/></svg>
<div class="hl" style="left:0;top:511px;width:1364px"></div>
<div class="t" style="left:0;top:514px;width:36px;text-align:center;font-size:11px;line-height:16px;color:#444746">18</div>
<div class="cell" style="left:41px;top:512px;width:36px;height:19px"><span class="rt" style="">Grocery</span></div>
<div class="cell" style="left:773px;top:512px;width:76px;height:19px">Revolut</div>
<div class="cell" style="left:854px;top:512px;width:109px;height:19px">Revolut EUR EUR</div>
<div class="cell" style="left:968px;top:512px;width:76px;height:19px">Food - Groceries</div>
<svg style="left:1050px;top:519px" width="8" height="5" viewBox="0 0 8 4.4"><path d="M0 0H8L4 4.2Z" fill="#7a7a7a"/></svg>
<div class="cell" style="left:1068px;top:512px;width:96px;height:19px">6c0888cd-e240-4</div>
<div class="cell" style="left:1169px;top:512px;width:96px;height:19px">2025-11-03T10:45</div>
<div class="cell" style="left:1270px;top:512px;width:80px;height:19px">Once Off</div>
<svg style="left:1353px;top:519px" width="8" height="5" viewBox="0 0 8 4.4"><path d="M0 0H8L4 4.2Z" fill="#7a7a7a"/></svg>
<div class="hl" style="left:0;top:531px;width:1364px"></div>
<div class="t" style="left:0;top:534px;width:36px;text-align:center;font-size:11px;line-height:16px;color:#444746">19</div>
<div class="cell" style="left:41px;top:532px;width:15px;height:19px"><span class="rt" style="color:#1155cc;text-decoration:underline">.ie</span></div>
<div class="cell" style="left:773px;top:532px;width:76px;height:19px">Revolut</div>
<div class="cell" style="left:854px;top:532px;width:109px;height:19px">Revolut EUR EUR</div>
<div class="cell" style="left:968px;top:532px;width:76px;height:19px">Miscellaneous</div>
<svg style="left:1050px;top:539px" width="8" height="5" viewBox="0 0 8 4.4"><path d="M0 0H8L4 4.2Z" fill="#7a7a7a"/></svg>
<div class="cell" style="left:1068px;top:532px;width:96px;height:19px">6c0879d7-6bf2-4</div>
<div class="cell" style="left:1169px;top:532px;width:96px;height:19px">2025-11-03T09:44</div>
<div class="cell" style="left:1270px;top:532px;width:80px;height:19px">Once Off</div>
<svg style="left:1353px;top:539px" width="8" height="5" viewBox="0 0 8 4.4"><path d="M0 0H8L4 4.2Z" fill="#7a7a7a"/></svg>
<div class="hl" style="left:0;top:551px;width:1364px"></div>
<div class="t" style="left:0;top:554px;width:36px;text-align:center;font-size:11px;line-height:16px;color:#444746">20</div>
<div class="cell" style="left:41px;top:552px;width:91px;height:19px"><span class="rt" style="">Macs Obama Plaz</span></div>
<div class="cell" style="left:773px;top:552px;width:76px;height:19px">Revolut</div>
<div class="cell" style="left:854px;top:552px;width:109px;height:19px">Revolut EUR EUR</div>
<div class="cell" style="left:968px;top:552px;width:76px;height:19px">Food - Eating</div>
<svg style="left:1050px;top:559px" width="8" height="5" viewBox="0 0 8 4.4"><path d="M0 0H8L4 4.2Z" fill="#7a7a7a"/></svg>
<div class="cell" style="left:1068px;top:552px;width:96px;height:19px">6c07582d-bfcc-a</div>
<div class="cell" style="left:1169px;top:552px;width:96px;height:19px">2025-11-02T13:15</div>
<div class="cell" style="left:1270px;top:552px;width:80px;height:19px">Once Off</div>
<svg style="left:1353px;top:559px" width="8" height="5" viewBox="0 0 8 4.4"><path d="M0 0H8L4 4.2Z" fill="#7a7a7a"/></svg>
<div class="hl" style="left:0;top:571px;width:1364px"></div>
<div class="t" style="left:0;top:574px;width:36px;text-align:center;font-size:11px;line-height:16px;color:#444746">21</div>
<div class="cell" style="left:41px;top:572px;width:20px;height:19px"><span class="rt" style="">Bar</span></div>
<div class="cell" style="left:773px;top:572px;width:76px;height:19px">Revolut</div>
<div class="cell" style="left:854px;top:572px;width:109px;height:19px">Revolut EUR EUR</div>
<div class="cell" style="left:968px;top:572px;width:76px;height:19px">Food - Eating</div>
<svg style="left:1050px;top:579px" width="8" height="5" viewBox="0 0 8 4.4"><path d="M0 0H8L4 4.2Z" fill="#7a7a7a"/></svg>
<div class="cell" style="left:1068px;top:572px;width:96px;height:19px">6c069cb6-581c-4</div>
<div class="cell" style="left:1169px;top:572px;width:96px;height:19px">2025-11-01T23:53</div>
<div class="cell" style="left:1270px;top:572px;width:80px;height:19px">Once Off</div>
<svg style="left:1353px;top:579px" width="8" height="5" viewBox="0 0 8 4.4"><path d="M0 0H8L4 4.2Z" fill="#7a7a7a"/></svg>
<div class="hl" style="left:0;top:591px;width:1364px"></div>
<div class="t" style="left:0;top:594px;width:36px;text-align:center;font-size:11px;line-height:16px;color:#444746">22</div>
<div class="cell" style="left:41px;top:592px;width:84.3px;height:19px"><span class="rt" style="">Spleen Rathcoole</span></div>
<div class="cell" style="left:773px;top:592px;width:76px;height:19px">Revolut</div>
<div class="cell" style="left:854px;top:592px;width:109px;height:19px">Revolut EUR EUR</div>
<div class="cell" style="left:968px;top:592px;width:76px;height:19px">Gas</div>
<svg style="left:1050px;top:599px" width="8" height="5" viewBox="0 0 8 4.4"><path d="M0 0H8L4 4.2Z" fill="#7a7a7a"/></svg>
<div class="cell" style="left:1068px;top:592px;width:96px;height:19px">6c060eb7-ea68-4</div>
<div class="cell" style="left:1169px;top:592px;width:96px;height:19px">2025-11-01T13:44</div>
<div class="cell" style="left:1270px;top:592px;width:80px;height:19px">Once Off</div>
<svg style="left:1353px;top:599px" width="8" height="5" viewBox="0 0 8 4.4"><path d="M0 0H8L4 4.2Z" fill="#7a7a7a"/></svg>
<div class="hl" style="left:0;top:611px;width:1364px"></div>
<div class="t" style="left:0;top:614px;width:36px;text-align:center;font-size:11px;line-height:16px;color:#444746">23</div>
<div class="cell" style="left:41px;top:612px;width:76.4px;height:19px"><span class="rt" style="">Carpenterstown</span></div>
<div class="cell" style="left:773px;top:612px;width:76px;height:19px">Revolut</div>
<div class="cell" style="left:854px;top:612px;width:109px;height:19px">Revolut EUR EUR</div>
<div class="cell" style="left:968px;top:612px;width:76px;height:19px">Food - Groceries</div>
<svg style="left:1050px;top:619px" width="8" height="5" viewBox="0 0 8 4.4"><path d="M0 0H8L4 4.2Z" fill="#7a7a7a"/></svg>
<div class="cell" style="left:1068px;top:612px;width:96px;height:19px">6c05f301-7f39-a</div>
<div class="cell" style="left:1169px;top:612px;width:96px;height:19px">2025-11-01T11:43</div>
<div class="cell" style="left:1270px;top:612px;width:80px;height:19px">Once Off</div>
<svg style="left:1353px;top:619px" width="8" height="5" viewBox="0 0 8 4.4"><path d="M0 0H8L4 4.2Z" fill="#7a7a7a"/></svg>
<div class="hl" style="left:0;top:631px;width:1364px"></div>
<div class="t" style="left:0;top:634px;width:36px;text-align:center;font-size:11px;line-height:16px;color:#444746">24</div>
<div class="cell" style="left:41px;top:632px;width:298.2px;height:19px"><span class="rt" style="letter-spacing:-0.57px">CHARLIE DECLAN COOMBES &amp; HANNAH MORAN JACKSON</span></div>
<div class="cell" style="left:383px;top:632px;width:380px;height:19px;letter-spacing:-0.57px">CHARLIE COOMBES</div>
<div class="cell" style="left:773px;top:632px;width:76px;height:19px">Revolut</div>
<div class="cell" style="left:854px;top:632px;width:109px;height:19px">Revolut EUR EUR</div>
<div class="cell" style="left:968px;top:632px;width:76px;height:19px">Income</div>
<svg style="left:1050px;top:639px" width="8" height="5" viewBox="0 0 8 4.4"><path d="M0 0H8L4 4.2Z" fill="#7a7a7a"/></svg>
<div class="cell" style="left:1068px;top:632px;width:96px;height:19px">6c05e7af-8bed-a</div>
<div class="cell" style="left:1169px;top:632px;width:96px;height:19px">2025-11-01T10:51</div>
<div class="cell" style="left:1270px;top:632px;width:80px;height:19px">Once Off</div>
<svg style="left:1353px;top:639px" width="8" height="5" viewBox="0 0 8 4.4"><path d="M0 0H8L4 4.2Z" fill="#7a7a7a"/></svg>
<div class="hl" style="left:0;top:651px;width:1364px"></div>
<div class="t" style="left:0;top:654px;width:36px;text-align:center;font-size:11px;line-height:16px;color:#444746">25</div>
<div class="cell" style="left:41px;top:652px;width:298.2px;height:19px"><span class="rt" style="letter-spacing:-0.57px">CHARLIE DECLAN COOMBES &amp; HANNAH MORAN JACKSON</span></div>
<div class="cell" style="left:383px;top:652px;width:380px;height:19px;letter-spacing:-0.57px">CHARLIE COOMBES</div>
<div class="cell" style="left:773px;top:652px;width:76px;height:19px">Revolut</div>
<div class="cell" style="left:854px;top:652px;width:109px;height:19px">Revolut EUR EUR</div>
<div class="cell" style="left:968px;top:652px;width:76px;height:19px">Income</div>
<svg style="left:1050px;top:659px" width="8" height="5" viewBox="0 0 8 4.4"><path d="M0 0H8L4 4.2Z" fill="#7a7a7a"/></svg>
<div class="cell" style="left:1068px;top:652px;width:96px;height:19px">6c05e772-9a7b-4</div>
<div class="cell" style="left:1169px;top:652px;width:96px;height:19px">2025-11-01T10:52</div>
<div class="cell" style="left:1270px;top:652px;width:80px;height:19px">Once Off</div>
<svg style="left:1353px;top:659px" width="8" height="5" viewBox="0 0 8 4.4"><path d="M0 0H8L4 4.2Z" fill="#7a7a7a"/></svg>
<div class="hl" style="left:0;top:671px;width:1364px"></div>
<div class="t" style="left:0;top:674px;width:36px;text-align:center;font-size:11px;line-height:16px;color:#444746">26</div>
<div class="cell" style="left:41px;top:672px;width:76.4px;height:19px"><span class="rt" style="">Carpenterstown</span></div>
<div class="cell" style="left:773px;top:672px;width:76px;height:19px">Revolut</div>
<div class="cell" style="left:854px;top:672px;width:109px;height:19px">Revolut EUR EUR</div>
<div class="cell" style="left:968px;top:672px;width:76px;height:19px">Food - Groceries</div>
<svg style="left:1050px;top:679px" width="8" height="5" viewBox="0 0 8 4.4"><path d="M0 0H8L4 4.2Z" fill="#7a7a7a"/></svg>
<div class="cell" style="left:1068px;top:672px;width:96px;height:19px">6c048f11-08da-4</div>
<div class="cell" style="left:1169px;top:672px;width:96px;height:19px">2025-10-31T10:25</div>
<div class="cell" style="left:1270px;top:672px;width:80px;height:19px">Once Off</div>
<svg style="left:1353px;top:679px" width="8" height="5" viewBox="0 0 8 4.4"><path d="M0 0H8L4 4.2Z" fill="#7a7a7a"/></svg>
<div class="hl" style="left:0;top:691px;width:1364px"></div>
<div class="t" style="left:0;top:694px;width:36px;text-align:center;font-size:11px;line-height:16px;color:#444746">27</div>
<div class="cell" style="left:41px;top:692px;width:76.4px;height:19px"><span class="rt" style="">Carpenterstown</span></div>
<div class="cell" style="left:773px;top:692px;width:76px;height:19px">Revolut</div>
<div class="cell" style="left:854px;top:692px;width:109px;height:19px">Revolut EUR EUR</div>
<div class="cell" style="left:968px;top:692px;width:76px;height:19px">Food - Groceries</div>
<svg style="left:1050px;top:699px" width="8" height="5" viewBox="0 0 8 4.4"><path d="M0 0H8L4 4.2Z" fill="#7a7a7a"/></svg>
<div class="cell" style="left:1068px;top:692px;width:96px;height:19px">6c03bc45-0a42-4</div>
<div class="cell" style="left:1169px;top:692px;width:96px;height:19px">2025-10-30T19:27</div>
<div class="cell" style="left:1270px;top:692px;width:80px;height:19px">Once Off</div>
<svg style="left:1353px;top:699px" width="8" height="5" viewBox="0 0 8 4.4"><path d="M0 0H8L4 4.2Z" fill="#7a7a7a"/></svg>
<div class="hl" style="left:0;top:711px;width:1364px"></div>
<div class="t" style="left:0;top:714px;width:36px;text-align:center;font-size:11px;line-height:16px;color:#444746">28</div>
<div class="cell" style="left:41px;top:712px;width:76.4px;height:19px"><span class="rt" style="">Carpenterstown</span></div>
<div class="cell" style="left:773px;top:712px;width:76px;height:19px">Revolut</div>
<div class="cell" style="left:854px;top:712px;width:109px;height:19px">Revolut EUR EUR</div>
<div class="cell" style="left:968px;top:712px;width:76px;height:19px">Food - Groceries</div>
<svg style="left:1050px;top:719px" width="8" height="5" viewBox="0 0 8 4.4"><path d="M0 0H8L4 4.2Z" fill="#7a7a7a"/></svg>
<div class="cell" style="left:1068px;top:712px;width:96px;height:19px">6c033454-da94-4</div>
<div class="cell" style="left:1169px;top:712px;width:96px;height:19px">2025-10-30T09:44</div>
<div class="cell" style="left:1270px;top:712px;width:80px;height:19px">Once Off</div>
<svg style="left:1353px;top:719px" width="8" height="5" viewBox="0 0 8 4.4"><path d="M0 0H8L4 4.2Z" fill="#7a7a7a"/></svg>
<div class="hl" style="left:0;top:731px;width:1364px"></div>
<div class="vl" style="left:40px;top:192px;height:544px;background:#c4c7c5"></div>
<div class="vl" style="left:379px;top:192px;height:544px;background:#e2e2e2"></div>
<div class="vl" style="left:769px;top:192px;height:544px;background:#e2e2e2"></div>
<div class="vl" style="left:850px;top:192px;height:544px;background:#e2e2e2"></div>
<div class="vl" style="left:964px;top:192px;height:544px;background:#e2e2e2"></div>
<div class="vl" style="left:1064px;top:192px;height:544px;background:#e2e2e2"></div>
<div class="vl" style="left:1165px;top:192px;height:544px;background:#e2e2e2"></div>
<div class="vl" style="left:1266px;top:192px;height:544px;background:#e2e2e2"></div>
<div class="vl" style="left:1364px;top:192px;height:544px;background:#e2e2e2"></div>
<div class="abs" style="left:0;top:735px;width:1376px;height:1px;background:#e2e2e2"></div>
<div class="abs" style="left:0;top:736px;width:40px;height:12px;background:#f8f9fa"></div>
<div class="abs" style="left:40px;top:736px;width:1px;height:12px;background:#e2e2e2"></div>
<div class="abs" style="left:298px;top:737px;width:517px;height:9px;border-radius:5px;background:#d6d7db"></div>
<div class="abs" style="left:1333px;top:736px;width:43px;height:12px;background:#f8f9fa"></div>
<div class="abs" style="left:1333px;top:736px;width:1px;height:12px;background:#e2e2e2"></div>
<div class="abs" style="left:1349px;top:736px;width:1px;height:12px;background:#e2e2e2"></div>
<div class="abs" style="left:1365px;top:736px;width:1px;height:12px;background:#e2e2e2"></div>
<svg style="left:1339px;top:738px" width="5" height="7" viewBox="0 0 5 7"><path d="M4.4 0V7L0.4 3.5Z" fill="#8a8a8a"/></svg>
<svg style="left:1356px;top:738px" width="5" height="7" viewBox="0 0 5 7"><path d="M0.6 0V7L4.6 3.5Z" fill="#8a8a8a"/></svg>
<div class="abs" style="left:1364px;top:192px;width:1px;height:544px;background:#e2e2e2"></div>
<div class="abs" style="left:1365px;top:192px;width:11px;height:544px;background:#fff"></div>
<div class="abs" style="left:1366px;top:193px;width:9px;height:26px;border-radius:5px;background:#d6d7db"></div>
<div class="abs" style="left:1365px;top:703px;width:11px;height:33px;background:#f8f9fa"></div>
<div class="abs" style="left:1365px;top:703px;width:11px;height:1px;background:#e2e2e2"></div>
<div class="abs" style="left:1365px;top:719px;width:11px;height:1px;background:#e2e2e2"></div>
<svg style="left:1367px;top:708px" width="8" height="5" viewBox="0 0 8 5"><path d="M0 4.4H8L4 0.4Z" fill="#8a8a8a"/></svg>
<svg style="left:1367px;top:725px" width="8" height="5" viewBox="0 0 8 5"><path d="M0 0.4H8L4 4.4Z" fill="#8a8a8a"/></svg>
<div class="abs" style="left:0;top:748px;width:1733px;height:1px;background:#dadce0"></div>
<div class="abs" style="left:0;top:749px;width:1733px;height:36px;background:#f9fbfd"></div>
<div class="abs" style="left:0;top:785px;width:1733px;height:4px;background:#ebe9e4"></div>
<div class="abs" style="left:0;top:785px;width:1733px;height:1px;background:#d9d8d4"></div>
<svg style="left:52px;top:763px" width="11" height="11" viewBox="0 0 11 11"><path d="M5.5 0.3V10.7M0.3 5.5H10.7" stroke="#444746" stroke-width="1.7"/></svg>
<svg style="left:90px;top:763px" width="14" height="10" viewBox="0 0 14 10"><path d="M0 1H14M0 5H14M0 9H14" stroke="#444746" stroke-width="1.7"/></svg>
<div class="abs" style="left:1086px;top:749px;width:183px;height:36px;background:#e1e9f7"></div>
<div class="t" style="left:142px;top:759px;font-size:14px;line-height:18px;color:#444746;letter-spacing:0.55px;-webkit-text-stroke:0.3px #444746">(1)Get Started</div>
<svg style="left:250px;top:766px" width="8" height="5" viewBox="0 0 8 4.4"><path d="M0 0H8L4 4.2Z" fill="#444746"/></svg>
<div class="t" style="left:283.5px;top:759px;font-size:14px;line-height:18px;color:#444746;letter-spacing:0px;-webkit-text-stroke:0.3px #444746">HOW TO</div>
<svg style="left:353px;top:766px" width="8" height="5" viewBox="0 0 8 4.4"><path d="M0 0H8L4 4.2Z" fill="#444746"/></svg>
<div class="t" style="left:386px;top:759px;font-size:14px;line-height:18px;color:#444746;letter-spacing:0.6px;-webkit-text-stroke:0.3px #444746">Summary</div>
<svg style="left:462px;top:766px" width="8" height="5" viewBox="0 0 8 4.4"><path d="M0 0H8L4 4.2Z" fill="#444746"/></svg>
<div class="t" style="left:495.3px;top:759px;font-size:14px;line-height:18px;color:#444746;letter-spacing:0.7px;-webkit-text-stroke:0.3px #444746">Budgeted Expenses - Estimate</div>
<svg style="left:719px;top:766px" width="8" height="5" viewBox="0 0 8 4.4"><path d="M0 0H8L4 4.2Z" fill="#444746"/></svg>
<div class="t" style="left:752.6px;top:759px;font-size:14px;line-height:18px;color:#444746;letter-spacing:0.65px;-webkit-text-stroke:0.3px #444746">Additional Inc, Exp &amp; Inv</div>
<svg style="left:932px;top:766px" width="8" height="5" viewBox="0 0 8 4.4"><path d="M0 0H8L4 4.2Z" fill="#444746"/></svg>
<div class="t" style="left:965.4px;top:759px;font-size:14px;line-height:18px;color:#444746;letter-spacing:0.7px;-webkit-text-stroke:0.3px #444746">June Actuals</div>
<svg style="left:1066px;top:766px" width="8" height="5" viewBox="0 0 8 4.4"><path d="M0 0H8L4 4.2Z" fill="#444746"/></svg>
<div class="t" style="left:1097.8px;top:759px;font-size:14px;line-height:18px;color:#0b57d0;letter-spacing:0.92px;-webkit-text-stroke:0.45px #0b57d0">Avery_Transactions</div>
<svg style="left:1249px;top:766px" width="8" height="5" viewBox="0 0 8 4.4"><path d="M0 0H8L4 4.2Z" fill="#0b57d0"/></svg>
<div class="t" style="left:1281.6px;top:759px;font-size:14px;line-height:18px;color:#444746;letter-spacing:0.5px;-webkit-text-stroke:0.3px #444746">Avery_Balances</div>
<svg style="left:1402px;top:766px" width="8" height="5" viewBox="0 0 8 4.4"><path d="M0 0H8L4 4.2Z" fill="#444746"/></svg>
<div class="abs" style="left:1430px;top:749px;width:78px;height:36px;overflow:hidden"><div class="t" style="left:5px;top:10px;font-size:14px;line-height:18px;color:#444746;letter-spacing:0.5px;-webkit-text-stroke:0.3px #444746">Avery_Categories</div></div>
<div class="abs" style="left:1508px;top:757px;width:1px;height:22px;background:#7a7a7a"></div>
<svg style="left:1527px;top:762px" width="7" height="12" viewBox="0 0 7 12"><path d="M6 1L1 6 6 11" fill="none" stroke="#b9bbbe" stroke-width="1.6"/></svg>
<svg style="left:1567px;top:762px" width="7" height="12" viewBox="0 0 7 12"><path d="M1 1L6 6 1 11" fill="none" stroke="#444746" stroke-width="1.7"/></svg>
<svg style="left:1708px;top:762px" width="7" height="12" viewBox="0 0 7 12"><path d="M6 1L1 6 6 11" fill="none" stroke="#444746" stroke-width="1.7"/></svg>
<div class="abs" style="left:1392px;top:67px;width:332px;height:681px;border-radius:16px 16px 0 0;background:#eef2f9"></div>
<div class="t" style="left:1408px;top:85px;font-size:16px;line-height:20px;color:#1f1f1f;letter-spacing:0.4px;-webkit-text-stroke:0.3px #1f1f1f">Avery</div>
<svg style="left:1689px;top:88px" width="14" height="14" viewBox="0 0 14 14"><path d="M1 1L13 13M13 1L1 13" stroke="#444746" stroke-width="1.9"/></svg>
<div class="abs" style="left:1408px;top:123px;width:286px;height:625px;border-top-left-radius:8px;background:#e9f0f9"></div>
<div class="abs" style="left:1694px;top:123px;width:13px;height:625px;background:#f8f8f8;border-left:1px solid #ececec"></div>
<div class="abs" style="left:1697px;top:126px;width:8px;height:568px;border-radius:4px;background:#c1c1c1"></div>
<div class="t" style="left:1420px;top:134.5px;font-size:16.5px;line-height:22px;color:#0c2a2a;letter-spacing:1.3px;-webkit-text-stroke:0.5px #0c2a2a">Avery</div>
<svg style="left:1652px;top:135px" width="24" height="24" viewBox="0 0 24 24"><circle cx="12" cy="12" r="10.3" fill="none" stroke="#111" stroke-width="2"/><circle cx="12" cy="9.2" r="3.4" fill="none" stroke="#111" stroke-width="1.9"/><path d="M5.8 18.2Q8 15.6 12 15.6T18.2 18.2" fill="none" stroke="#111" stroke-width="1.9"/></svg>
<div class="abs" style="left:1416px;top:163px;width:269px;height:550px;border-radius:9px;background:linear-gradient(180deg,#d5be79 0%,#cdb265 35%,#c2a350 70%,#bb9b45 100%)"></div>
<div class="abs" style="left:1432px;top:179px;width:237px;height:4px;border-radius:2px;background:#a88f56"></div>
<div class="abs" style="left:1432px;top:179px;width:142px;height:4px;border-radius:2px 0 0 2px;background:#6b5a38"></div>
<svg style="left:1432px;top:207px" width="32" height="32" viewBox="0 0 32 32"><circle cx="16" cy="16" r="15.1" fill="none" stroke="#222" stroke-width="1.7"/><path d="M21 16H11.4M15.4 12L11.2 16 15.4 20" fill="none" stroke="#222" stroke-width="1.6"/></svg>
<div class="t" style="left:1615px;top:214px;font-size:13px;line-height:16px;color:#2a2a2a;letter-spacing:-0.1px;-webkit-text-stroke:0.35px #2a2a2a">Skip</div>
<svg style="left:1646px;top:217px" width="12" height="11" viewBox="0 0 12 11"><path d="M0.5 5.5H10.6M6.4 1.2L10.8 5.5 6.4 9.8" fill="none" stroke="#2a2a2a" stroke-width="1.6"/></svg>
<div class="t" style="left:1431px;top:255px;font-size:25px;line-height:30px;font-weight:bold;color:#2b2b2b;letter-spacing:0.5px">Let Avery AI</div>
<div class="t" style="left:1431px;top:285px;font-size:25px;line-height:30px;font-weight:bold;color:#2b2b2b;letter-spacing:0.85px">categorize your</div>
<div class="t" style="left:1431px;top:315px;font-size:25px;line-height:30px;font-weight:bold;color:#2b2b2b;letter-spacing:1.05px">transactions</div>
<div class="t" style="left:1432px;top:367px;font-size:14px;line-height:21px;color:#2f2f2f;letter-spacing:0.8px">Avery&#39;s AI will automatically label</div>
<div class="t" style="left:1432px;top:388px;font-size:14px;line-height:21px;color:#2f2f2f;letter-spacing:0.8px">each transaction using the</div>
<div class="t" style="left:1432px;top:409px;font-size:14px;line-height:21px;color:#2f2f2f;letter-spacing:0.8px">categories you created earlier.</div>
<div class="abs" style="left:1432px;top:446px;width:237px;height:50px;border-radius:8px;background:#fff"></div>
<svg style="left:1447px;top:462px" width="18" height="18" viewBox="0 0 18 18"><circle cx="16.00" cy="9.00" r="1.3" fill="#333"/><circle cx="13.95" cy="13.95" r="1.3" fill="#333"/><circle cx="9.01" cy="16.00" r="1.3" fill="#333"/><circle cx="4.06" cy="13.96" r="1.3" fill="#333"/><circle cx="2.00" cy="9.01" r="1.3" fill="#333"/><circle cx="8.98" cy="2.00" r="1.3" fill="#333"/><circle cx="13.94" cy="4.04" r="1.3" fill="#333"/></svg>
<div class="t" style="left:1550px;top:461px;font-size:16px;line-height:18px;color:#222">Categorising...</div>
<div class="abs" style="left:1432px;top:512px;width:237px;height:107px;border-radius:8px;background:rgba(110,80,10,0.10)"></div>
<svg style="left:1444px;top:526px" width="14" height="14" viewBox="0 0 14 14"><circle cx="7" cy="7" r="6.6" fill="#2a2a2a"/><rect x="6.2" y="6" width="1.6" height="4.4" fill="#c4a658"/><circle cx="7" cy="4" r="0.95" fill="#c4a658"/></svg>
<div class="t" style="left:1466px;top:524px;font-size:14px;line-height:21px;color:#2f2f2f;letter-spacing:0.65px">This will take a couple of</div>
<div class="t" style="left:1466px;top:545px;font-size:14px;line-height:21px;color:#2f2f2f;letter-spacing:0.65px">minutes. Wait 90 seconds</div>
<div class="t" style="left:1466px;top:566px;font-size:14px;line-height:21px;color:#2f2f2f;letter-spacing:0.65px">and click skip in the top</div>
<div class="t" style="left:1466px;top:587px;font-size:14px;line-height:21px;color:#2f2f2f;letter-spacing:0.65px">right corner</div>
<div class="abs" style="left:1432px;top:636px;width:237px;height:44px;border-radius:8px;background:rgba(110,80,10,0.07)"></div>
<div class="t" style="left:1432px;top:648px;width:237px;text-align:center;font-size:14px;line-height:18px;color:#2a2a2a;letter-spacing:0.85px;-webkit-text-stroke:0.35px #2a2a2a">Exit onboarding</div>
<div class="abs" style="left:1415px;top:723px;width:86px;height:22px;border-radius:5px;background:#fff"></div>
<div class="t" style="left:1418px;top:726px;font-size:12px;line-height:16px;color:#5f6368">version: 1.9.46</div>
<div class="abs" style="left:950px;top:126px;width:136px;height:621px;border:10px solid #f4303f;border-radius:7px;box-shadow:inset 0 2px 3px rgba(0,0,0,0.06)"></div>
</body></html>
